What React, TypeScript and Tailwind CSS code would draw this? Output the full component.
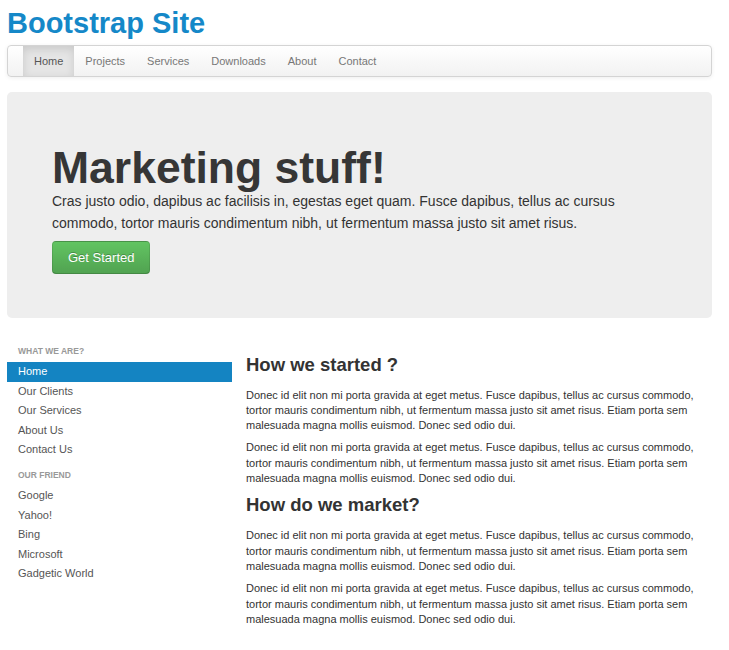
const navItems = ["Home", "Projects", "Services", "Downloads", "About", "Contact"];

const whatWeAre = ["Home", "Our Clients", "Our Services", "About Us", "Contact Us"];
const ourFriend = ["Google", "Yahoo!", "Bing", "Microsoft", "Gadgetic World"];

const lorem =
  "Donec id elit non mi porta gravida at eget metus. Fusce dapibus, tellus ac cursus commodo, tortor mauris condimentum nibh, ut fermentum massa justo sit amet risus. Etiam porta sem malesuada magna mollis euismod. Donec sed odio dui.";

function NavHeader({ label, first }: { label: string; first?: boolean }) {
  return (
    <div
      className={`${first ? "" : "mt-[6.3px]"} px-[11px] py-[2.3px] text-[8.5px] font-bold uppercase leading-[15.6px] text-[#999]`}
    >
      {label}
    </div>
  );
}

function NavLink({ label, active }: { label: string; active?: boolean }) {
  return (
    <a
      href="#"
      className={`block px-[11px] py-[2px] text-[11px] leading-[15.5px] ${
        active ? "bg-[#1484c2] text-white" : "text-[#555]"
      }`}
    >
      {label}
    </a>
  );
}

function Section({ title, first }: { title: string; first?: boolean }) {
  return (
    <div className={first ? "" : "mt-[6.5px]"}>
      <h3 className="mb-[11px] text-[18.5px] font-bold leading-[24px] text-[#333]">{title}</h3>
      <p className="mb-[7px] text-[11px] leading-[15.3px] text-[#333]">{lorem}</p>
      <p className="mb-[7px] text-[11px] leading-[15.3px] text-[#333]">{lorem}</p>
    </div>
  );
}

export default function App() {
  return (
    <div className="min-h-[650px] bg-white font-['Liberation_Sans',Arial,sans-serif]">
      <div className="ml-[7px] w-[705px] pt-[5px]">
        <h1 className="text-[29px] font-bold leading-[36px] text-[#1588c8]">Bootstrap Site</h1>

        {/* navbar */}
        <div className="mt-[4px] flex h-[31.7px] rounded-[4px] border border-[#d4d4d4] bg-gradient-to-b from-white to-[#f2f2f2] pl-[15px] shadow-[0_1px_4px_rgba(0,0,0,0.065)]">
          {navItems.map((item, i) => (
            <a
              key={item}
              href="#"
              className={`flex items-center px-[11px] text-[11px] ${
                i === 0
                  ? "bg-[#e5e5e5] text-[#555] shadow-[inset_0_3px_8px_rgba(0,0,0,0.125)]"
                  : "text-[#777]"
              }`}
            >
              {item}
            </a>
          ))}
        </div>

        {/* hero */}
        <div className="mt-[15.3px] rounded-[5px] bg-[#eeeeee] px-[45px] pb-[44px] pt-[54px]">
          <h1 className="text-[44.5px] font-bold leading-[44.5px] text-[#363636]">Marketing stuff!</h1>
          <p className="text-[14px] leading-[22px] text-[#333]">
            Cras justo odio, dapibus ac facilisis in, egestas eget quam. Fusce dapibus, tellus ac cursus
            commodo, tortor mauris condimentum nibh, ut fermentum massa justo sit amet risus.
          </p>
          <a
            href="#"
            className="mt-[7px] inline-flex h-[33px] items-center rounded-[4px] border border-[rgba(0,0,0,0.1)] border-b-[rgba(0,0,0,0.3)] bg-gradient-to-b from-[#62c462] to-[#51a351] px-[15px] text-[13px] text-white [text-shadow:0_-1px_0_rgba(0,0,0,0.25)]"
          >
            Get Started
          </a>
        </div>

        {/* content */}
        <div className="mt-[23.6px] flex gap-[14px]">
          <div className="w-[225px] shrink-0">
            <NavHeader label="What we are?" first />
            {whatWeAre.map((item, i) => (
              <NavLink key={item} label={item} active={i === 0} />
            ))}
            <NavHeader label="Our Friend" />
            {ourFriend.map((item) => (
              <NavLink key={item} label={item} />
            ))}
          </div>
          <div className="w-[452px] pt-[10.5px]">
            <Section title="How we started ?" first />
            <Section title="How do we market?" />
          </div>
        </div>
      </div>
    </div>
  );
}
